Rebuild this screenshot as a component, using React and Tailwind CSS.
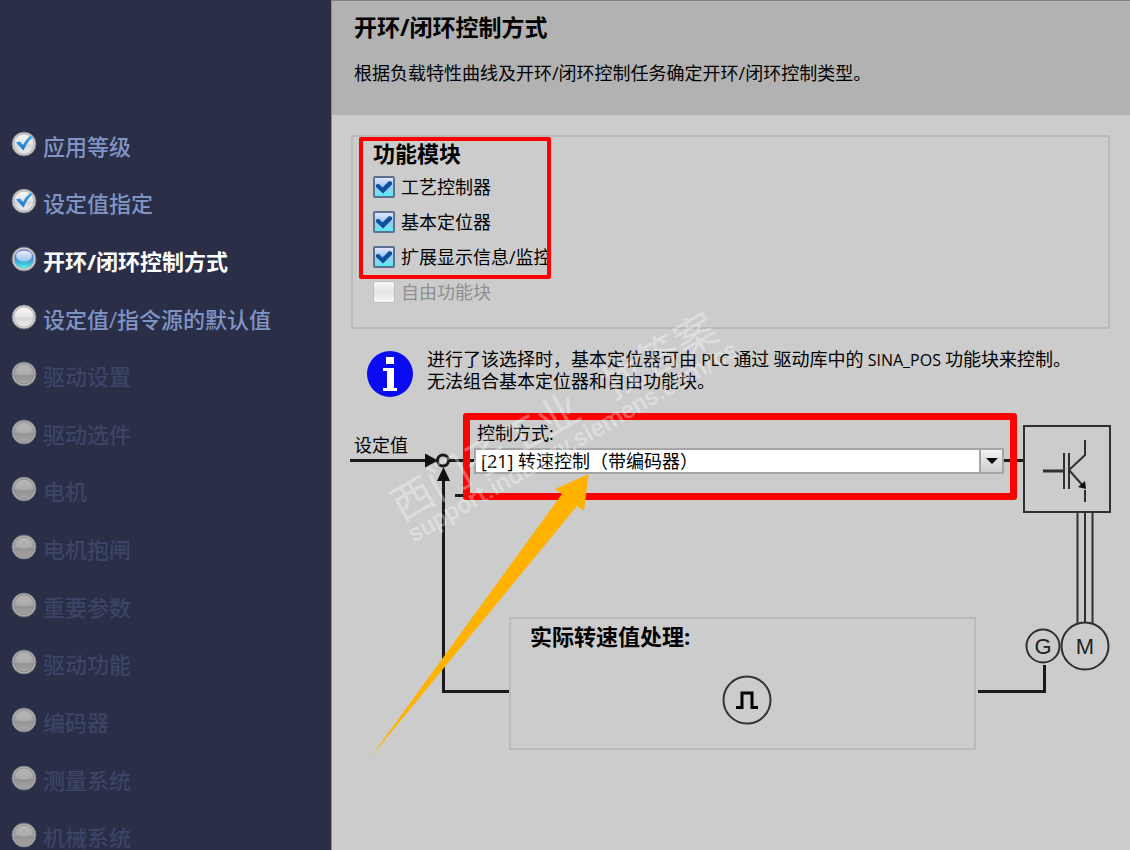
import React, { useState } from 'react';

const steps = [
  { label: '应用等级', state: 'done' },
  { label: '设定值指定', state: 'done' },
  { label: '开环/闭环控制方式', state: 'current' },
  { label: '设定值/指令源的默认值', state: 'open' },
  { label: '驱动设置', state: 'locked' },
  { label: '驱动选件', state: 'locked' },
  { label: '电机', state: 'locked' },
  { label: '电机抱闸', state: 'locked' },
  { label: '重要参数', state: 'locked' },
  { label: '驱动功能', state: 'locked' },
  { label: '编码器', state: 'locked' },
  { label: '测量系统', state: 'locked' },
  { label: '机械系统', state: 'locked' },
];

const labelColors = {
  done: 'font-medium text-[#8094c4]',
  current: 'font-bold text-white',
  open: 'font-medium text-[#8094c4]',
  locked: 'font-medium text-[#3c4566]',
};

const modules = [
  { id: 'tech', label: '工艺控制器', checked: true },
  { id: 'epos', label: '基本定位器', checked: true },
  { id: 'monitor', label: '扩展显示信息/监控', checked: true },
  { id: 'free', label: '自由功能块', checked: false, disabled: true },
];

const Gradients = () => (
  <svg width="0" height="0" className="absolute" aria-hidden="true">
    <defs>
      <linearGradient id="bulb-open" x1="0" y1="0" x2="0" y2="1">
        <stop offset="0" stopColor="#fafafa" />
        <stop offset="0.5" stopColor="#e4e4e4" />
        <stop offset="0.55" stopColor="#d6d6d6" />
        <stop offset="1" stopColor="#efefef" />
      </linearGradient>
      <linearGradient id="bulb-current" x1="0" y1="0" x2="0" y2="1">
        <stop offset="0" stopColor="#4a62cc" />
        <stop offset="0.5" stopColor="#3f93dc" />
        <stop offset="0.75" stopColor="#3fc4d8" />
        <stop offset="1" stopColor="#6ff4e4" />
      </linearGradient>
      <linearGradient id="bulb-shine" x1="0" y1="0" x2="0" y2="1">
        <stop offset="0" stopColor="#ffffff" stopOpacity="0.9" />
        <stop offset="1" stopColor="#ffffff" stopOpacity="0.45" />
      </linearGradient>
      <linearGradient id="bulb-locked" x1="0" y1="0" x2="0" y2="1">
        <stop offset="0" stopColor="#b8b8b8" />
        <stop offset="0.5" stopColor="#a4a4a4" />
        <stop offset="0.6" stopColor="#929292" />
        <stop offset="1" stopColor="#a6a6a6" />
      </linearGradient>
      <linearGradient id="tick-blue" x1="0" y1="0" x2="0" y2="1">
        <stop offset="0" stopColor="#3fa4ea" />
        <stop offset="1" stopColor="#1678d0" />
      </linearGradient>
    </defs>
  </svg>
);

const Bulb = ({ state }) => {
  const locked = state === 'locked';
  const fill = state === 'done' ? 'url(#bulb-open)' : `url(#bulb-${state})`;

  return (
    <svg width="26" height="26" viewBox="0 0 26 26" className="shrink-0" aria-hidden="true">
      <circle cx="13" cy="13" r="12" fill={locked ? '#b4b4b4' : '#d4d4d4'} stroke="#70727c" strokeWidth="1" />
      <circle cx="13" cy="13" r="10" fill={fill} stroke={locked ? '#8c8c8c' : '#b4b4b4'} strokeWidth="1" />
      {state === 'current' && <ellipse cx="13" cy="10" rx="8" ry="5.5" fill="url(#bulb-shine)" />}
      {locked && <ellipse cx="13" cy="10" rx="7.5" ry="4.5" fill="#b4b4b4" opacity="0.6" />}
      {state === 'done' && (
        <path d="M5 11.5 L9 10.5 L12 14 Q15 8 19 5 L22 6 Q16 11 12.500 19.5 Z" fill="url(#tick-blue)" />
      )}
    </svg>
  );
};

const Sidebar = () => (
  <nav className="h-screen w-[332px] shrink-0 overflow-hidden border-r border-[#8a8c98] bg-[#2a2e47] pt-[115px]">
    <ul className="grid h-[749px] auto-rows-fr">
      {steps.map((step) => (
        <li key={step.label} className="flex items-center">
          <button
            type="button"
            disabled={step.state === 'locked'}
            className={`flex items-center gap-[6px] pl-[11px] text-[22px] leading-[26px] ${labelColors[step.state]}`}
          >
            <Bulb state={step.state} />
            <span className="pt-1">{step.label}</span>
          </button>
        </li>
      ))}
    </ul>
  </nav>
);

const ModuleOption = ({ module, checked, onChange }) => (
  <div className="flex h-[35px] items-center gap-[6px]">
    <span className="relative flex">
      <input
        id={module.id}
        type="checkbox"
        checked={checked}
        disabled={module.disabled}
        onChange={onChange}
        className="size-[22px] appearance-none rounded-[2px] border-2 border-[#5d7090] bg-linear-to-b from-[#dfe6fb] via-[#9cc8f0] to-[#50ecf0] disabled:border disabled:border-[#bdbdbd] disabled:from-[#f6f6f6] disabled:via-[#e4e4e4] disabled:to-[#f6f6f6]"
      />
      {checked && (
        <svg viewBox="0 0 22 22" className="pointer-events-none absolute inset-0 size-[22px]" aria-hidden="true">
          <path d="M3 8.500 L6 8 L9.5 11.5 L16 5 L19 6 L19 8.500 L10 17.5 L3 11 Z" fill="#0d4fa0" />
        </svg>
      )}
    </span>
    <label
      htmlFor={module.id}
      className={`whitespace-nowrap text-[18px] leading-[22px] ${module.disabled ? 'text-[#8f8f8f]' : 'text-black'}`}
    >
      {module.label}
    </label>
  </div>
);

const InfoIcon = () => (
  <svg width="46" height="46" viewBox="0 0 46 46" className="shrink-0" aria-hidden="true">
    <circle cx="23" cy="23" r="23" fill="#0a0af0" />
    <rect x="19" y="6" width="8" height="7" fill="#fff" />
    <path d="M16 17 H27 V37 H30 V40 H16 V37 H20 V20 H16 Z" fill="#fff" />
  </svg>
);

const Wiring = () => (
  <svg width="780" height="380" viewBox="350 400 780 380" fill="none" stroke="#1a1a1a" aria-hidden="true">
    {/* setpoint path */}
    <path d="M350 460.5 H428 M449 460.5 H475 M455 495.5 H466 M1004 460.5 H1024" strokeWidth="3" />
    <path d="M425 453.500 L438 460.5 L425 467.500 Z" fill="#111" stroke="none" />
    <circle cx="443" cy="460.5" r="5.500" strokeWidth="3" />
    {/* feedback path */}
    <path d="M443.500 478 V691.5 H509" strokeWidth="3" />
    <path d="M443.500 467 L450 481 H437 Z" fill="#111" stroke="none" />
    <path d="M978 691.5 H1044.500 V665" strokeWidth="3" />
    {/* power module */}
    <g stroke="#303030">
      <rect x="1024" y="426" width="86" height="86" strokeWidth="2" />
      <path d="M1043 471 H1063" strokeWidth="3" />
      <path d="M1064 453 V489 M1069 453 V489 M1085 440 V455 L1069 470 L1084 487 M1085 490 V502" strokeWidth="2" />
      <path d="M1086 489 L1078 487 L1085 481 Z" fill="#111" stroke="none" />
      <path d="M1077.500 512 V624 M1085 512 V623 M1092.500 512 V624" strokeWidth="2" />
      <circle cx="1043" cy="646" r="16.500" strokeWidth="2" />
      <circle cx="1085" cy="646" r="23.500" strokeWidth="2" />
    </g>
  </svg>
);

const ControlDiagram = () => (
  <div className="relative h-[380px] w-[780px]">
    <Wiring />
    <span className="absolute top-[34px] left-1 text-[18px] leading-[22px]">设定值</span>

    <div className="absolute top-[22px] left-[124px] flex w-[530px] flex-col gap-1">
      <label htmlFor="mode" className="pl-[3px] text-[18px] leading-[22px]">
        控制方式:
      </label>
      <span className="relative flex">
        <select
          id="mode"
          className="h-[26px] w-full appearance-none border-2 border-[#a6a6a6] bg-white pl-[5px] text-[18px] leading-[22px] text-black"
        >
          <option>[21] 转速控制（带编码器）</option>
        </select>
        <span className="pointer-events-none absolute inset-y-0 right-0 flex w-[25px] items-center justify-center border-2 border-[#a6a6a6] bg-linear-to-b from-[#f2f2f2] to-[#cfcfcf]">
          <svg width="12" height="6" viewBox="0 0 12 6" aria-hidden="true">
            <path d="M0 0 H12 L6 6 Z" fill="#000" />
          </svg>
        </span>
      </span>
    </div>

    <div className="absolute top-[217px] left-[159px] flex h-[133px] w-[467px] flex-col border-2 border-[#bababa] pt-[2px] pr-[11px] pl-[19px]">
      <h3 className="text-[22px] leading-[30px] font-bold">实际转速值处理:</h3>
      <svg width="50" height="50" viewBox="0 0 50 50" fill="none" className="mt-6 self-center" aria-hidden="true">
        <circle cx="25" cy="25" r="23.500" stroke="#333" strokeWidth="2" />
        <path d="M14 32.500 H20 V18 H30 V32.500 H36" stroke="#000" strokeWidth="3" />
      </svg>
    </div>

    <span className="absolute top-[236px] left-[681px] w-6 text-center font-[Liberation_Sans] text-[22px] leading-[22px] text-[#222]">G</span>
    <span className="absolute top-[236px] left-[723px] w-6 text-center font-[Liberation_Sans] text-[22px] leading-[22px] text-[#222]">M</span>

    <div className="absolute top-[13px] left-[113px] h-[87px] w-[554px] rounded-[3px] border-[7px] border-[#fe0000]" />
  </div>
);

const Watermark = () => (
  <div className="pointer-events-none absolute top-[491px] left-[52px] origin-top-left -rotate-30 whitespace-pre text-white/35 select-none">
    <p className="text-[42px] leading-[40px]">西门子工业{'   '}找答案</p>
    <p className="font-[Roboto] text-[25px] leading-[24px] font-medium">support.industry.siemens.com/cs</p>
  </div>
);

const Pointer = () => (
  <svg width="222" height="288" viewBox="368 472 222 288" className="pointer-events-none absolute top-[472px] left-9" aria-hidden="true">
    <path d="M588.500 474 L555 489 L562 494 L370 758 L577 506 L584 511 Z" fill="#ffb300" />
  </svg>
);

const App = () => {
  const [selected, setSelected] = useState(modules.filter((m) => m.checked).map((m) => m.id));

  const toggle = (id) => {
    setSelected((prev) => (prev.includes(id) ? prev.filter((item) => item !== id) : [...prev, id]));
  };

  return (
    <div className="flex h-screen overflow-hidden bg-[#cccccc] font-['Open_Sans','Noto_Sans_CJK_SC',sans-serif] text-black">
      <Gradients />
      <Sidebar />
      <main className="relative min-w-0 flex-1">
        <header className="h-[115px] border-t border-[#808080] bg-[#b2b2b2] px-[22px] pt-[10px]">
          <h1 className="text-[23px] leading-[32px] font-bold">开环/闭环控制方式</h1>
          <p className="mt-[18px] text-[18px] leading-[24px]">根据负载特性曲线及开环/闭环控制任务确定开环/闭环控制类型。</p>
        </header>

        <section className="relative mt-5 mr-5 ml-[19px] h-[194px] border-2 border-[#bababa] px-5">
          <h2 className="text-[22px] leading-[32px] font-bold">功能模块</h2>
          {modules.map((module) => (
            <ModuleOption
              key={module.id}
              module={module}
              checked={selected.includes(module.id)}
              onChange={() => toggle(module.id)}
            />
          ))}
          <div className="pointer-events-none absolute top-0 left-[6px] h-[142px] w-[192px] rounded-[2px] border-4 border-[#fe0000]" />
        </section>

        <section className="mt-[19px] flex h-[52px] items-center gap-[14px] pl-[35px]">
          <InfoIcon />
          <p className="pb-[7px] text-[18px] leading-[21px] whitespace-nowrap">
            进行了该选择时，基本定位器可由<span className="text-[16px]"> PLC </span>通过<span className="text-[16px]"> </span>
            驱动库中的<span className="text-[16px]"> SINA_POS </span>功能块来控制。
            <br />
            无法组合基本定位器和自由功能块。
          </p>
        </section>

        <section className="pl-[18px]">
          <ControlDiagram />
        </section>

        <Watermark />
        <Pointer />
      </main>
    </div>
  );
};

export default App;
